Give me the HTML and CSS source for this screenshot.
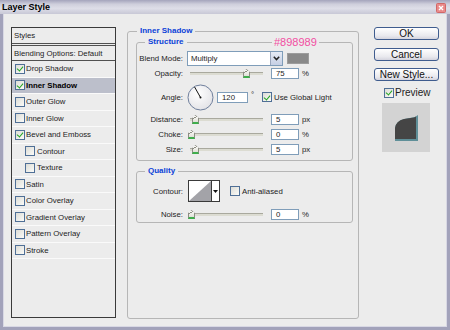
FILE: index.html
```html
<!DOCTYPE html>
<html lang="en">
<head>
  <meta charset="UTF-8">
  <title>Layer Style</title>
  <link rel="stylesheet" href="styles.css">
</head>
<body>
  <div class="window">
    <div class="titlebar">
      <span class="title">Layer Style</span>
      <span class="close">
        <svg width="10" height="10" viewBox="0 0 10 10">
          <rect x="0.5" y="0.5" width="9" height="9" rx="1" fill="#ea8a8a" stroke="#d06868"/>
          <path d="M3 3 L7 7 M7 3 L3 7" stroke="#fff" stroke-width="1.4"/>
        </svg>
      </span>
    </div>

    <div class="body">
      <ul class="styles-list">
        <li class="head first">Styles</li>
        <li class="head second">Blending Options: Default</li>
        <li class="item"><span class="cb on"></span>Drop Shadow</li>
        <li class="item active"><span class="cb on"></span>Inner Shadow</li>
        <li class="item"><span class="cb"></span>Outer Glow</li>
        <li class="item"><span class="cb"></span>Inner Glow</li>
        <li class="item"><span class="cb on"></span>Bevel and Emboss</li>
        <li class="item sub"><span class="cb"></span>Contour</li>
        <li class="item sub"><span class="cb"></span>Texture</li>
        <li class="item"><span class="cb"></span>Satin</li>
        <li class="item"><span class="cb"></span>Color Overlay</li>
        <li class="item"><span class="cb"></span>Gradient Overlay</li>
        <li class="item"><span class="cb"></span>Pattern Overlay</li>
        <li class="item"><span class="cb"></span>Stroke</li>
      </ul>

      <fieldset class="group main">
        <legend>Inner Shadow</legend>

        <fieldset class="group structure">
          <legend>Structure</legend>

          <div class="row row-blend">
            <span class="label">Blend Mode:</span>
            <div class="select">
              <span class="select-text">Multiply</span>
              <span class="select-btn">
                <svg width="7" height="5" viewBox="0 0 7 5"><path d="M0.8 0.8 L3.5 3.6 L6.2 0.8" stroke="#222" stroke-width="1.5" fill="none"/></svg>
              </span>
            </div>
            <span class="swatch"></span>
          </div>

          <div class="row row-slider first-slider">
            <span class="label">Opacity:</span>
            <div class="slider"><span class="thumb" style="left: 56px"></span></div>
            <span class="input">75</span>
            <span class="unit">%</span>
          </div>

          <div class="row row-angle">
            <span class="label">Angle:</span>
            <svg class="dial" width="27" height="27" viewBox="0 0 27 27">
              <defs>
                <radialGradient id="dialFill" cx="40%" cy="35%" r="70%">
                  <stop offset="0" stop-color="#ffffff"/>
                  <stop offset="1" stop-color="#e2e2e6"/>
                </radialGradient>
              </defs>
              <circle cx="13.5" cy="13.5" r="12.5" fill="url(#dialFill)" stroke="#6f7f9c"/>
              <line x1="13.5" y1="13.5" x2="7.5" y2="2.8" stroke="#111" stroke-width="1"/>
              <circle cx="13.5" cy="13.5" r="1" fill="#111"/>
            </svg>
            <span class="input wide">120</span>
            <span class="unit deg">°</span>
            <span class="cb on global"></span>
            <span class="cb-label">Use Global Light</span>
          </div>

          <div class="row row-slider">
            <span class="label">Distance:</span>
            <div class="slider"><span class="thumb" style="left: 5px"></span></div>
            <span class="input">5</span>
            <span class="unit">px</span>
          </div>

          <div class="row row-slider">
            <span class="label">Choke:</span>
            <div class="slider"><span class="thumb" style="left: 1px"></span></div>
            <span class="input">0</span>
            <span class="unit">%</span>
          </div>

          <div class="row row-slider">
            <span class="label">Size:</span>
            <div class="slider"><span class="thumb" style="left: 5px"></span></div>
            <span class="input">5</span>
            <span class="unit">px</span>
          </div>
        </fieldset>

        <fieldset class="group quality">
          <legend>Quality</legend>

          <div class="row row-contour">
            <span class="label">Contour:</span>
            <div class="contour">
              <svg width="22" height="20" viewBox="0 0 22 20">
                <rect width="22" height="20" fill="#fff"/>
                <path d="M0 20 L22 0 L22 20 Z" fill="#a3a3a8"/>
              </svg>
              <span class="contour-btn">
                <svg width="5" height="3" viewBox="0 0 5 3"><path d="M0 0 H5 L2.5 3 Z" fill="#111"/></svg>
              </span>
            </div>
            <span class="cb anti"></span>
            <span class="cb-label">Anti-aliased</span>
          </div>

          <div class="row row-slider noise">
            <span class="label">Noise:</span>
            <div class="slider"><span class="thumb" style="left: 1px"></span></div>
            <span class="input">0</span>
            <span class="unit">%</span>
          </div>
        </fieldset>
      </fieldset>

      <div class="side">
        <button class="btn">OK</button>
        <button class="btn">Cancel</button>
        <button class="btn">New Style...</button>
        <div class="preview-row">
          <span class="cb on"></span>
          <span class="preview-label">Preview</span>
        </div>
        <div class="preview">
          <svg width="48" height="49" viewBox="0 0 48 49">
            <defs>
              <filter id="soft" x="-20%" y="-20%" width="140%" height="140%">
                <feGaussianBlur stdDeviation="0.5"/>
              </filter>
            </defs>
            <rect width="48" height="49" fill="#d3d3d3"/>
            <g filter="url(#soft)">
              <path d="M13 25 Q14 18 22 16 L33 14 L36 12 V38 H13 Z" fill="#5f8f98"/>
              <path d="M13 25 Q14 18 22 16 L32 14.5 L34 13.5 V36 H13 Z" fill="#454545"/>
            </g>
          </svg>
        </div>
      </div>
    </div>

    <span class="note">#898989</span>
  </div>
</body>
</html>
```

FILE: styles.css
```css
* {
  box-sizing: border-box;
}

body {
  margin: 0;
  font-family: "Liberation Sans", Arial, sans-serif;
  font-size: 7.8px;
  color: #1c1c1c;
}

.window {
  position: relative;
  width: 450px;
  height: 330px;
  display: flex;
  flex-direction: column;
  background: #a2a2ba;
}

.titlebar {
  height: 14px;
  display: flex;
  align-items: center;
  justify-content: space-between;
  padding: 0 4px 0 2px;
  background: linear-gradient(to bottom, #a4a4bc 0%, #cfcfdc 30%, #dedee8 60%, #c8c8d6 100%);
}

.title {
  font-size: 9px;
  font-weight: bold;
  color: #000;
  line-height: 14px;
}

.close {
  display: flex;
  margin-top: 2px;
}

.body {
  flex: 1;
  margin: 0 3px 3px;
  background: #ececec;
  display: flex;
  align-items: flex-start;
  padding: 13px 0 0 8px;
  box-shadow: inset 1px 0 0 #d8d8e4, inset -1px 0 0 #d8d8e4, inset 0 -1px 0 #d8d8e4;
}

/* left list */

.styles-list {
  width: 105px;
  height: 291px;
  margin: 0;
  padding: 0;
  list-style: none;
  border: 1px solid #3a3a3a;
  background: #ececec;
  flex: none;
}

.head {
  display: flex;
  align-items: center;
  padding-left: 2px;
}

.head.first {
  height: 16px;
  border-bottom: 1px solid #505050;
}

.head.second {
  height: 16px;
  margin-top: 1px;
  border-top: 1px solid #505050;
  border-bottom: 1px solid #505050;
}

.item {
  height: 16.5px;
  display: flex;
  align-items: center;
  padding-left: 3px;
  border-bottom: 1px solid #fafafa;
}

.item .cb {
  margin-right: 1px;
}

.item.sub {
  padding-left: 13px;
}

.item.sub .cb {
  margin-right: 2px;
}

.item.active {
  background: #bcbfcb;
  font-weight: bold;
  color: #000;
}

/* checkbox */

.cb {
  width: 10px;
  height: 10px;
  flex: none;
  border: 1px solid #4f6f96;
  background: linear-gradient(135deg, #dcdcd6, #fbfbf8);
  position: relative;
}

.cb.on::after {
  content: "";
  position: absolute;
  left: 1.5px;
  top: 0.5px;
  width: 3px;
  height: 5px;
  border: solid #22a522;
  border-width: 0 1.7px 1.7px 0;
  transform: rotate(40deg);
}

/* group boxes */

.group {
  margin: 0;
  min-width: 0;
  border: 1px solid #b6b6b6;
  border-radius: 3px;
}

.group legend {
  padding: 0 3px;
  font-size: 8px;
  line-height: 10px;
  font-weight: bold;
  color: #0a3fd8;
}

.main {
  width: 232px;
  height: 293px;
  margin: -1px 0 0 11px;
  padding: 1px 5px 0 8px;
  flex: none;
}

.main > legend {
  margin-left: 1px;
}

.structure {
  padding: 4px 0 5px 0;
}

.structure > legend,
.quality > legend {
  margin-left: 8px;
}

.quality {
  margin-top: 5px;
  padding: 4px 0 2px 0;
}

.row {
  display: flex;
  align-items: center;
}

.label {
  width: 46px;
  flex: none;
  text-align: right;
  margin-right: 4px;
}

.row-blend {
  height: 15px;
}

.select {
  width: 96px;
  height: 15px;
  display: flex;
  border: 1px solid #7f9db9;
  background: #fff;
}

.select-text {
  flex: 1;
  padding-left: 3px;
  line-height: 13px;
}

.select-btn {
  width: 12px;
  display: flex;
  align-items: center;
  justify-content: center;
  border-left: 1px solid #9aa6bc;
  background: linear-gradient(to bottom, #e6ebf5, #c5cfe4);
}

.swatch {
  width: 22px;
  height: 11px;
  margin-left: 4px;
  background: #898989;
  border: 1px solid #9c9c9c;
}

.row-slider {
  height: 12px;
  margin-top: 3px;
}

.row-slider.first-slider {
  margin-top: 1px;
}

.slider {
  position: relative;
  width: 80px;
  height: 12px;
  margin-right: 4px;
  flex: none;
}

.slider::before {
  content: "";
  position: absolute;
  left: 3px;
  right: 4px;
  top: 5px;
  height: 2px;
  background: #dcdcd2;
  border-top: 1px solid #a9a99e;
}

.thumb {
  position: absolute;
  top: 2px;
  width: 7px;
  height: 9px;
  background: linear-gradient(to bottom, #fafaf6, #e0e0d8);
  border: 1px solid #8c8c84;
  border-bottom: 2px solid #3fae4c;
  clip-path: polygon(0 35%, 50% 0, 100% 35%, 100% 100%, 0 100%);
}

.thumb::before {
  content: "";
  position: absolute;
  left: -1px;
  top: -1px;
  width: 7px;
  height: 4px;
  background: linear-gradient(to bottom right, transparent 45%, #8c8c84 46%, #8c8c84 60%, transparent 61%);
}

.input {
  width: 28px;
  height: 11px;
  flex: none;
  border: 1px solid #7f9db9;
  background: #fff;
  padding-left: 4px;
  line-height: 9px;
}

.input.wide {
  width: 31px;
  margin-left: 3px;
}

.unit {
  margin-left: 3px;
}

.unit.deg {
  width: 8px;
  align-self: flex-start;
  margin-top: 6px;
}

.row-angle {
  height: 26px;
  margin-top: 5px;
}

.dial {
  flex: none;
}

.cb.global {
  margin-left: 3px;
}

.cb-label {
  margin-left: 2px;
}

.row-contour {
  height: 22px;
}

.contour {
  display: flex;
  height: 22px;
  margin-left: 1px;
  border: 1px solid #3a3a3a;
  background: #fff;
}

.contour-btn {
  width: 8px;
  display: flex;
  align-items: center;
  justify-content: center;
  border-left: 1px solid #3a3a3a;
}

.cb.anti {
  margin-left: 10px;
}

.row-slider.noise {
  margin-top: 6px;
}

/* right column */

.side {
  width: 65px;
  margin-left: 15px;
  display: flex;
  flex-direction: column;
  flex: none;
}

.btn {
  height: 13px;
  margin: 0 0 7.5px;
  padding: 0;
  font-family: "Liberation Sans", Arial, sans-serif;
  font-size: 10px;
  line-height: 11px;
  color: #111;
  border: 1px solid #3f5c8e;
  border-radius: 3px;
  background: linear-gradient(to bottom, #ffffff, #e9e9ee 70%, #d4d4de);
}

.preview-row {
  display: flex;
  align-items: center;
  height: 11px;
  margin-top: -1.5px;
  padding-left: 10px;
}

.preview-label {
  margin-left: 1px;
  font-size: 10px;
}

.preview {
  display: flex;
  margin: 5px 0 0 8px;
}

.note {
  position: absolute;
  left: 272px;
  top: 36px;
  padding: 0 2px;
  background: #ececec;
  font-size: 11px;
  line-height: 12px;
  color: #f24ea2;
}
```
